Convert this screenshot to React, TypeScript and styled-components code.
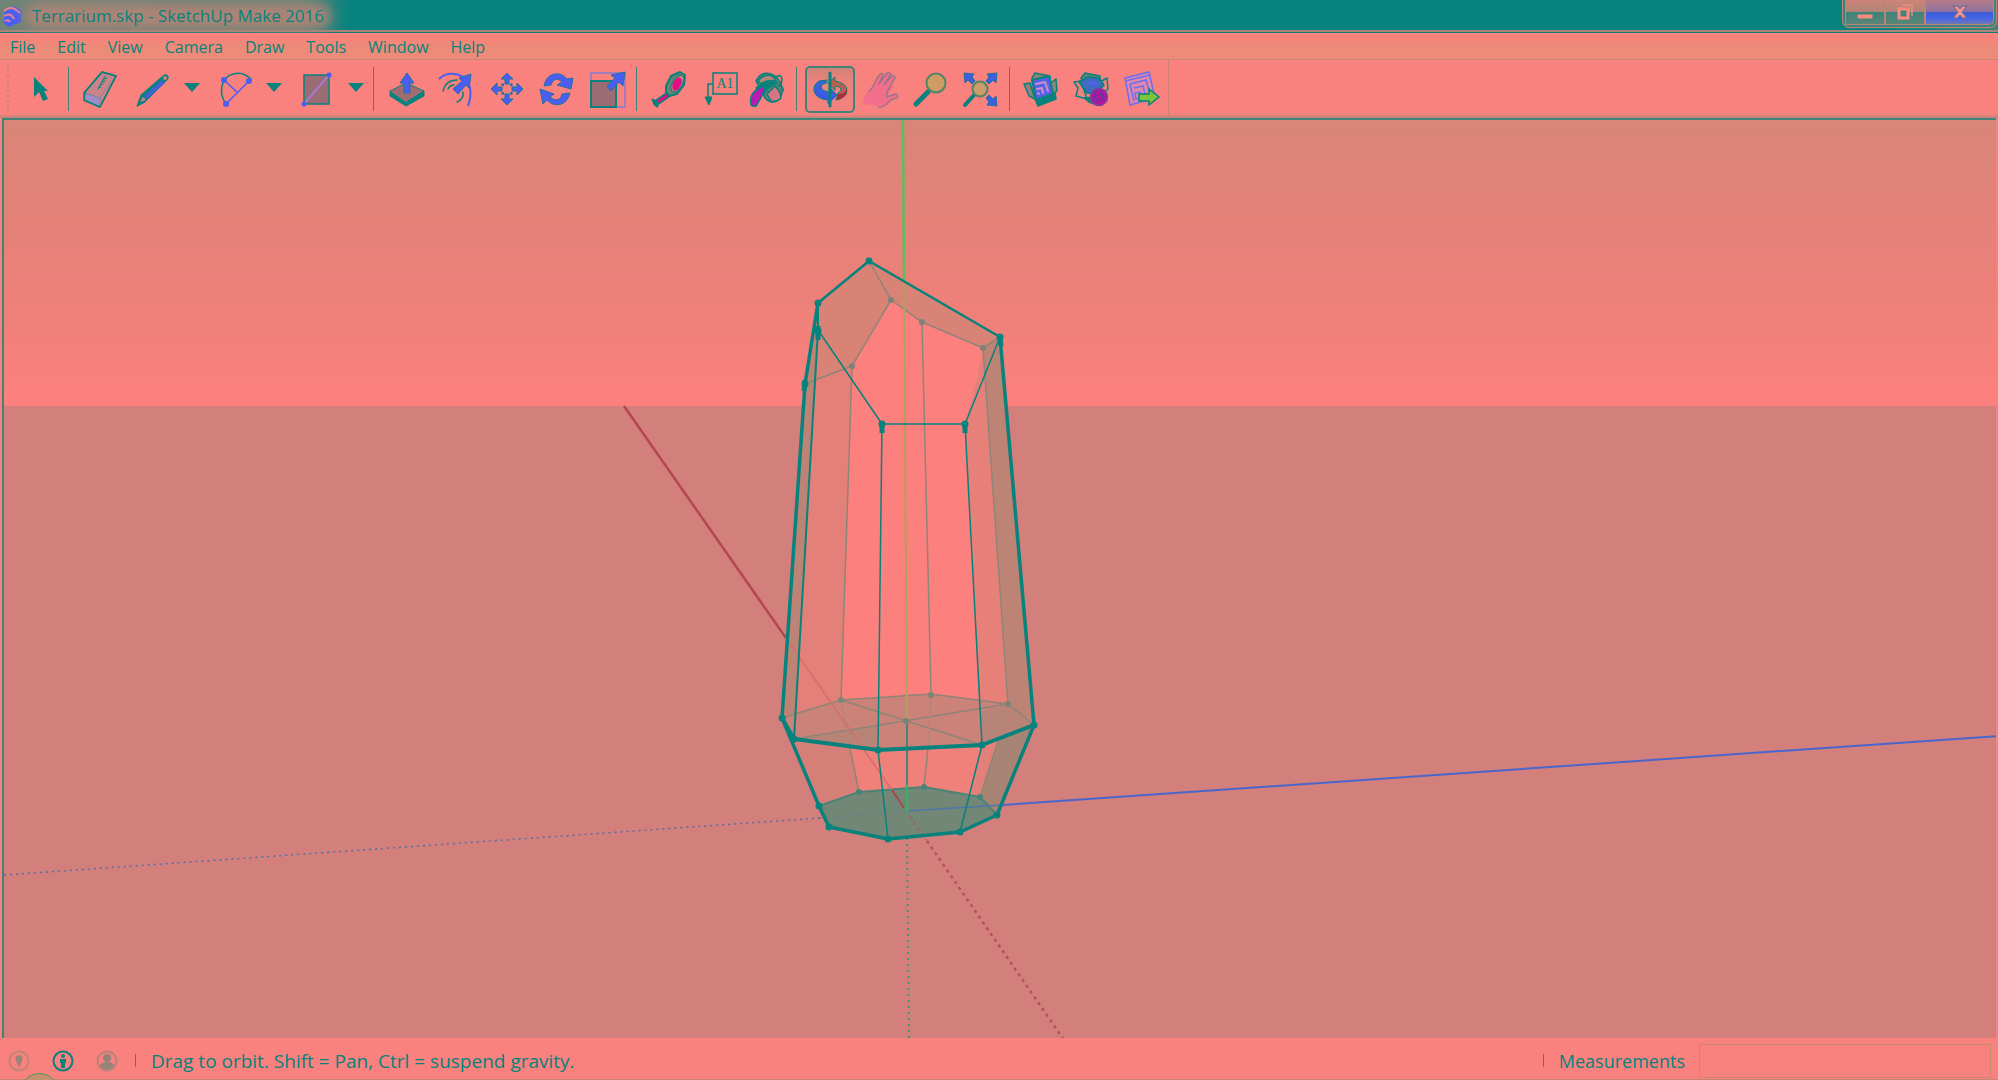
import React from "react";
import styled, { createGlobalStyle } from "styled-components";

const C = {
  teal: "#07827c",
  salmon: "#f9817e",
  blue: "#4a5ff2",
  edge: "#3f8479",
  dim: "#a38578",
  plum: "#9c6c74",
};

const GlobalStyle = createGlobalStyle`
  *, *::before, *::after { box-sizing: border-box; }
  body {
    margin: 0;
    background: ${C.salmon};
    color: ${C.teal};
    font: 16px/24px "Open Sans", "Noto Sans", sans-serif;
  }
  button, input { font: inherit; color: inherit; }
`;

const Window = styled.div`
  min-height: 100vh;
  display: flex;
  flex-direction: column;
  overflow: hidden;
`;

const TitleBar = styled.header`
  height: 33px;
  display: flex;
  align-items: flex-start;
  justify-content: space-between;
  background: linear-gradient(90deg, #6f8477 0, #5f8478 300px, #07827e 350px, #07827e 94%, #3f847c 100%);
  border-bottom: 1px solid ${C.teal};
  box-shadow: inset 0 -2px 0 #a98578;
`;

const Caption = styled.div`
  display: flex;
  align-items: center;
  gap: 10px;
  height: 32px;
  padding-left: 2px;
`;

const Title = styled.h1`
  margin: 0;
  font-size: 17px;
  font-weight: 400;
  line-height: 12px;
  border-radius: 8px;
  background: #a98476;
  box-shadow: 0 0 12px 7px #a98476;
`;

const WindowButtons = styled.div`
  display: flex;
  height: 28px;
  margin-right: 1px;
  padding: 0 2px 2px;
  border: 1px solid #c08578;
  border-top: 0;
  border-radius: 0 0 7px 7px;
  background: #3c8479;
`;

const WindowButton = styled.button<{ $wide?: boolean }>`
  width: ${(p) => (p.$wide ? 69 : 40)}px;
  padding: 0;
  display: grid;
  place-items: center;
  border: 1px solid #b98578;
  border-top: 0;
  border-radius: ${(p) => (p.$wide ? "0 0 5px 0" : "0")};
  background: ${(p) =>
    p.$wide
      ? "linear-gradient(#b77c86 0, #8d72a0 48%, #3d5bd0 50%, #4463e6 75%, #6e78b4 100%)"
      : "linear-gradient(#cf8478 0, #b08478 48%, #39847a 50%, #5d8478 100%)"};
`;

const MenuBar = styled.nav`
  display: flex;
  gap: 22px;
  height: 27px;
  padding: 1px 10px 0;
  background: linear-gradient(#ff807f 0, #f18779 40%, #ea8c78 60%, #f08979 100%);
  border-bottom: 1px solid #c48a78;
`;

const MenuItem = styled.button`
  padding: 0;
  border: 0;
  background: none;
  line-height: 24px;
`;

const ToolRow = styled.div`
  display: flex;
  height: 58px;
  background: linear-gradient(${C.salmon} 54px, #b98478 58px);
`;

const Tools = styled.div`
  display: flex;
  align-items: center;
  height: 58px;
  border-right: 1px solid #cf8478;
`;

const Grip = styled.div`
  width: 14px;
  height: 48px;
  padding-left: 7px;
  &::before {
    content: "";
    display: block;
    width: 2px;
    height: 100%;
    background: repeating-linear-gradient(#c48478 0 2px, transparent 2px 5px);
  }
`;

const Separator = styled.div`
  width: 1px;
  height: 44px;
  margin: 0 8px 0 4px;
  background: ${C.edge};
`;

const Tool = styled.button<{ $w?: number; $on?: boolean }>`
  width: ${(p) => p.$w ?? 50}px;
  height: 47px;
  padding: 0;
  display: grid;
  place-items: center;
  border-radius: 5px;
  border: ${(p) => (p.$on ? `2px solid ${C.edge}` : "0")};
  background: ${(p) => (p.$on ? "linear-gradient(#cf8478 0, #ec827d 30%, #f4827e 100%)" : "none")};
`;

const Stage = styled.main`
  flex: 1;
  min-height: 0;
  display: flex;
  margin: 0 2px;
  border-left: 2px solid ${C.edge};
  border-top: 2px solid ${C.edge};
  background: linear-gradient(#d98577 0, #eb8079 18%, #fd807e 31.2%, #d37f7b 31.2%);
`;

const Scene = styled.svg`
  flex: 1;
  width: 100%;
  min-width: 0;
  display: block;
`;

const StatusBar = styled.footer`
  position: relative;
  display: flex;
  align-items: center;
  height: 42px;
  padding: 5px 7px 1px 8px;
  font-size: 18px;
  border-bottom: 1px solid #c98478;
`;

const StatusButtons = styled.div`
  display: flex;
  gap: 22px;
  margin-right: 17px;
`;

const StatusButton = styled.button`
  width: 22px;
  height: 22px;
  padding: 0;
  border: 0;
  background: none;
`;

const Bar = styled.span`
  width: 1px;
  height: 13px;
  margin-right: 15px;
  background: ${C.edge};
`;

const Hint = styled.p`
  flex: 1;
  margin: 0;
  font-size: 19px;
`;

const Measure = styled.label`
  display: flex;
  align-items: center;
  gap: 14px;
`;

const MeasureInput = styled.input`
  width: 292px;
  height: 34px;
  border: 1px solid #c98a72;
  background: transparent;
`;

const StartOrb = styled.div`
  position: absolute;
  left: 20px;
  top: 35px;
  width: 39px;
  height: 7px;
  overflow: hidden;
  &::before {
    content: "";
    display: block;
    height: 39px;
    border: 1px solid #4f9a55;
    border-radius: 50%;
    background: #c59070;
  }
`;

const Icon = ({ children, size = 40 }: { children: React.ReactNode; size?: number }) => (
  <svg width={size} height={size} viewBox="0 0 40 40" fill="none" aria-hidden="true" display="block">
    {children}
  </svg>
);

const T = { stroke: C.teal, strokeLinejoin: "round" as const, strokeLinecap: "round" as const };

const icons = {
  select: <path d="M15 8v20l5-5 4 9 5-2-4-8h4z" fill={C.teal} />,
  eraser: (
    <g {...T} strokeWidth="1.5">
      <path d="M4 24 22 3l14 4-16 31L4 31z" fill="#c98389" />
      <path d="m5 24 15 5v9L4 31z" fill="#a08cc6" stroke="#7b84a0" strokeWidth="1" />
      <path d="m20 28 15-20" stroke="#97848a" strokeWidth="1" />
      <path d="M22 3 36 7 20 38 4 31 5 23z" />
      <path d="m18 19 3-1m-1-2 3-1m-1-2 3-1m-1-2 3-1m-9 11 7-13" strokeWidth="1" />
    </g>
  ),
  pencil: (
    <g {...T}>
      <path d="m5 37 4-11L32 6q5-1 4 4L13 33z" fill={C.teal} />
      <path d="m12 27 18-16 3 3-18 16z" fill="#3f62d6" stroke="none" />
      <path d="m8 33 3-5 3 3z" fill="#d77f80" stroke="none" />
      <circle cx="33" cy="9" r="2" fill="#c4847c" stroke="none" />
    </g>
  ),
  arc: (
    <g transform="translate(1 0)">
      <path d="M11 35C3 24 6 8 18 5q10-3 18 5" {...T} strokeWidth="1.5" />
      <path d="M11 35 34 12M9 11l14 13" stroke={C.blue} strokeWidth="1.5" />
      <g fill={C.blue}>
        <circle cx="11" cy="35" r="3" />
        <circle cx="34" cy="12" r="3" />
        <circle cx="9" cy="11" r="3" />
      </g>
    </g>
  ),
  rect: (
    <g>
      <path d="M8 6h25v29H8z" fill={C.plum} stroke={C.teal} strokeWidth="1.5" />
      <path d="M8 35 33 6" stroke="#a27bd0" strokeWidth="2" />
      <circle cx="8" cy="35" r="2.5" fill={C.blue} />
      <circle cx="33" cy="6" r="2.5" fill={C.blue} />
    </g>
  ),
  push: (
    <g>
      <path d="M3 23v4l16 10 18-10v-5L19 34z" fill={C.teal} {...T} />
      <path d="M3 22 19 14l18 8-18 11z" fill="#a06c70" {...T} />
      <path d="M17 24V14h-4l7-10 7 10h-4v10z" fill={C.blue} stroke="#24709c" />
    </g>
  ),
  offset: (
    <g>
      <path d="M2 10C14-2 42 6 31 37" stroke={C.blue} strokeWidth="2" />
      <path d="M6 22q3-11 14-11M11 20q2-4 6-4M20 33q7-3 6-10" {...T} strokeWidth="1.5" />
      <path d="m16 20 9-8-3-3 12-4-2 14-3-3-8 9z" fill={C.blue} stroke="#24709c" />
    </g>
  ),
  move: (
    <g fill={C.blue} stroke="#24709c">
      {[0, 90, 180, 270].map((a) => (
        <path key={a} d="M18 15v-5h-4l6-6 6 6h-4v5z" transform={`rotate(${a} 20 20)`} />
      ))}
      {[45, 135, 225, 315].map((a) => (
        <circle key={a} cx="20" cy="14" r="1" transform={`rotate(${a} 20 20)`} />
      ))}
    </g>
  ),
  rotate: (
    <g fill={C.blue} stroke="#24709c">
      <path d="M7 17C9 4 23 1 30 10l6-1-2 11-14-4 5-3c-5-5-9-3-11 3z" />
      <path d="M33 24C30 37 17 39 10 31l-4 4-3-15 14 5-4 3c6 5 11 3 12-3z" />
    </g>
  ),
  scale: (
    <g>
      <path d="M4 4h34v34H4z" stroke="#837bd6" strokeWidth="1.5" />
      <path d="M4 12h25v26H4z" fill={C.plum} stroke={C.teal} strokeWidth="2" />
      <path d="m20 17 8-8-4-3 14-3-2 14-4-4-8 9z" fill={C.blue} stroke="#24709c" />
    </g>
  ),
  tape: (
    <g {...T}>
      <path d="M19 25 6 34" strokeWidth="6" />
      <path d="m18 26-9 6" stroke="#d80f83" strokeWidth="3" />
      <path d="m16 17 5-10 9-4 5 3-1 10-7 9-8 2-3-4z" fill="#648476" strokeWidth="2" />
      <path d="m21 17 4-8 6-3 3 3-2 8-6 6-4-1z" fill="#c8887a" strokeWidth="1" />
      <ellipse cx="27" cy="15" rx="4" ry="7" transform="rotate(25 27 15)" fill="#e40b84" stroke="none" />
      <path d="m3 31 4 6" strokeWidth="3" />
    </g>
  ),
  text: (
    <g>
      <path d="M14 4h24v21H14zM14 15H9v14" stroke={C.teal} strokeWidth="1.5" />
      <path d="M6 28h7l-3 8z" fill={C.teal} stroke={C.teal} />
      <text x="26" y="19" textAnchor="middle" fill={C.teal} fontSize="14" fontFamily="Liberation Serif, serif">A1</text>
    </g>
  ),
  paint: (
    <g {...T} strokeWidth="1.5" transform="translate(-2 0)">
      <path d="M10 12Q15 2 25 5q9 3 11 14 1 8-5 13-7 3-12-3z" fill="#5a8477" />
      <path d="M12 12q6-8 14-5 3 2 4 5-9-2-15 3z" fill="#b48673" />
      <path d="m21 25 8-8q6 6 6 12-5 5-10 3z" fill="#d47685" />
      <path d="M10 19q9-8 21-5-10 4-14 12z" fill={C.teal} />
      <path d="M5 36q-3-14 14-19-1 8-9 20-3 1-5-1z" fill="#b91bb4" />
      <path d="M28 9q7-5 8 1 0 5-4 7m2-1q4 3 3 6" />
    </g>
  ),
  orbit: (
    <g {...T} strokeWidth="1">
      <path d="M17 11 9 12q-6 4-5 10 2 8 14 9v4l9-9-8-8v5q-7-1-8-5 0-3 5-4z" fill="#3c60dd" />
      <path d="M4 20q1 8 14 11v4l9-9q-12 6-23-6z" fill="#3a55ee" stroke="none" />
      <path d="m18 14 7-6v4q12 2 12 10-1 7-11 9l2-7q4-2 3-4-1-3-6-3v4z" fill="#b8604f" />
      <path d="M37 19q-1 6-9 6l-2 6q10-1 11-9z" fill="#a8323c" stroke="none" />
      <path d="M20 4v33" strokeWidth="3" />
    </g>
  ),
  hand: (
    <g>
      <path
        d="M3 35q1-10 9-16L19 6q3-3 4 0l-2 6 6-8q3-1 4 1l-5 8 6-6q3-1 3 2l-6 9 3-1q2 1 0 3l-5 7 8-3q4 1 2 4-7 1-10 6-5 5-11 3-7-2-13-2z"
        fill="#f16f8b"
      />
      <path
        d="m9 22 3-3 7-13q3-3 4 0l-4 9 8-11q3-1 4 1l-7 11 8-9q3-1 3 2l-7 12q-2 4-1 7l8-3q4 1 2 4-7 1-10 6-5 4-9 3"
        stroke="#9c7584"
        strokeWidth="1.5"
        strokeLinejoin="round"
      />
    </g>
  ),
  zoom: (
    <g {...T}>
      <path d="M18 23 6 35" strokeWidth="5" />
      <circle cx="26" cy="14" r="9.500" fill="#cd9d65" stroke="#4f8568" strokeWidth="2" />
    </g>
  ),
  extents: (
    <g>
      <path d="m15 25-10 11" {...T} strokeWidth="4" />
      <circle cx="20" cy="20" r="7.500" fill="#c99d65" stroke="#4f8568" strokeWidth="2" />
      <g fill="#3c60dd" stroke="#24709c">
        <path d="m4 4 10 1-2 3 3 4-3 3-4-4-3 3z" />
        <path d="m37 4-10 1 2 3-3 4 3 3 4-4 3 3z" />
        <path d="m37 37-10-1 2-3-3-4 3-3 4 4 3-3z" />
      </g>
    </g>
  ),
  models: (
    <g {...T} strokeWidth="1.5" transform="translate(-2 0)">
      <path d="m3 15 6-1 5 16-6-3z" fill="#8c847a" />
      <path d="m11 9 3-5 15 3v6l-16 3z" fill="#8c847a" />
      <path d="m28 15 7-5 1 12-7 6z" fill="#8c847a" />
      <path d="m14 30 20-6 1 6-18 7z" fill={C.teal} />
      <path d="m11 11 17-4 4 18-17 6z" fill="#5263ea" strokeWidth="2" />
      <path d="m15 15 9-2 3 9m-11-2 5-1 1 5m-5 0 1 1" stroke="#d68cc4" strokeWidth="2" />
    </g>
  ),
  warehouse: (
    <g {...T} strokeWidth="1.5" transform="translate(-2 0)">
      <path d="m3 13 7-1 6 18-11-3 2-8z" fill="#ec837c" />
      <path d="m10 9 4-5 15 3v6l-16 3z" fill="#5f8578" />
      <path d="m29 13 7-4 1 11-7 6z" fill="#ec837c" />
      <path d="m13 29 12-1 1 8-8-3z" fill={C.teal} />
      <path d="m8 13 9-5 11 1 5 7-8 9-9-1z" fill="#3f6cc0" />
      <path d="m15 13 6-1 6 2-4 3z" fill="#5263ea" stroke="none" />
      <circle cx="28" cy="28" r="8.500" fill="#b313a9" stroke="#7d4398" />
      <path d="M26 22q-4 2-1 5l-3 3m9-9-2 5 4 1-3 5m-4-3v4" stroke="#5a3f90" />
    </g>
  ),
  layout: (
    <g transform="translate(-2 0)">
      <path d="m4 9 24-6 6 26-25 7z" fill="#e386ac" stroke="#6c70ee" strokeWidth="1.5" />
      <path d="m4 12 25-6M9 15l16-4 4 14M9 15l4 17M13 19l9-2 2 8M14 24l5-1 1 6-5 1z" stroke="#6c70ee" strokeWidth="1.5" />
      <path d="M18 25h10v-5l10 8-10 8v-4H18z" fill="#7bc53b" stroke={C.teal} strokeWidth="1.5" />
    </g>
  ),
};

type Name = keyof typeof icons;

const Plain = ({ name, label, w, on }: { name: Name; label: string; w?: number; on?: boolean }) => (
  <Tool aria-label={label} aria-pressed={on} $w={w} $on={on}>
    <Icon>{icons[name]}</Icon>
  </Tool>
);

const Split = ({ name, label }: { name: Name; label: string }) => (
  <>
    <Plain name={name} label={label} w={58} />
    <Tool aria-label={`${label} options`} $w={24}>
      <svg width="18" height="14" viewBox="0 0 18 14" aria-hidden="true">
        <path d="M0 1h16L8 10z" fill={C.teal} />
      </svg>
    </Tool>
  </>
);

const joints = [
  [869, 261], [818, 303], [818, 331], [805, 384], [1000, 337], [882, 424], [965, 424],
  [782, 718], [794, 739], [878, 750], [982, 745], [1034, 725],
  [819, 806], [829, 827], [888, 839], [960, 832], [997, 815],
];
const backJoints = [
  [891, 300], [922, 322], [983, 348], [852, 366], [841, 700], [931, 695], [1008, 704], [906, 721],
];

const Terrarium = () => (
  <Scene viewBox="4 120 1992 918" preserveAspectRatio="xMidYMid slice" role="img" aria-label="Terrarium model">
    <path d="M624 406 786 638" stroke="#b5484f" strokeWidth="2.5" />
    <path d="M1003 805 1998 736" stroke="#4a66cc" strokeWidth="2" />
    <path d="M4 875 820 818" stroke="#4f6fae" strokeWidth="1.5" strokeDasharray="2 4" />
    <path d="M907 838 909 1040" stroke="#3f9670" strokeWidth="2" strokeDasharray="2 4" />
    <path d="M927 841 1064 1040" stroke="#b84f57" strokeWidth="2.5" strokeDasharray="3 4" />

    <path d="M869 261 1000 337 1034 725 997 815 960 832 888 839 829 827 819 806 782 718 805 384 818 303z" fill="#e38079" />
    <path d="M891 300 922 322 983 348 978 375 965 424 982 712 931 694 841 700 852 366z" fill="#fc807e" />
    <path d="M869 261 891 300 852 366 805 384 818 303zM869 261 1000 337 983 348 922 322 891 300z" fill="#d88376" />
    <path d="M818 330 805 384 782 718 794 739z" fill="#bd8475" />
    <path d="M1000 337 1034 725 1008 704 983 348z" fill="#bd8475" />
    <path d="M965 424 983 372 1008 704 979 702z" fill="#e78079" />
    <path d="M782 718 841 700 931 694 1008 704 1034 725 982 745 878 750 794 739z" fill="#cb8278" />
    <path d="M794 739 878 726V750zM981 712 1008 704 1034 725 982 745z" fill="#b98478" />
    <path d="M794 739 850 748 859 792 819 806z" fill="#d67f78" />
    <path d="M850 748 878 750 982 745 970 797 924 787 859 792z" fill="#f0807a" />
    <path d="M998 740 1034 725 997 815 980 797z" fill="#a88475" />
    <path d="M819 806 859 792 924 787 980 797 997 815 960 832 888 839 829 827z" fill="#728775" />

    <g stroke="#8d8577" strokeWidth="1.5" fill="none">
      <path d="M869 261 891 300 852 366 805 384M891 300 922 322 983 348 1000 337" />
      <path d="M852 366 841 700M922 322 931 694M983 348 1008 704" />
      <path d="M782 718 841 700 931 694 1008 704 1034 725M794 739 1008 704M841 700 982 745" />
      <path d="M850 748 859 792M928 748 924 787M998 741 980 797" />
    </g>
    <path d="M841 700 850 748M931 694 928 748M1008 704 998 741" stroke="#b58478" />
    <path d="M819 806 859 792 924 787 980 797 997 815" stroke="#498476" strokeWidth="2" fill="none" />
    <path d="M786 638 892 790" stroke="#cf6f6d" strokeWidth="1.5" />
    <path d="M892 790 904 808" stroke="#a3484d" strokeWidth="2" />
    <path d="M906 811 1003 805" stroke="#4d77a8" strokeWidth="1.500" />
    <path d="M820 818 906 811" stroke="#5e7d94" strokeDasharray="2 4" />
    <path d="M910 816 926 840" stroke="#a3605f" strokeWidth="2" strokeDasharray="3 4" />
    <path d="M903 118 904 280" stroke="#5fbd5e" strokeWidth="2.5" />
    <path d="M904 280 907 722" stroke="#b59f60" strokeWidth="2" />
    <path d="M907 722V785" stroke="#498476" strokeWidth="2" />
    <path d="M907 784V812" stroke="#43ad65" strokeWidth="2.5" />

    <g fill="#7c8477">
      {backJoints.map(([x, y]) => <circle key={`${x}-${y}`} cx={x} cy={y} r="3" />)}
    </g>
    <g fill="#498476">
      <circle cx="859" cy="792" r="3" /><circle cx="924" cy="787" r="3" /><circle cx="980" cy="797" r="3" />
    </g>
    <g stroke={C.teal} fill="none" strokeLinejoin="round">
      <path d="M818 303 869 261 1000 337" strokeWidth="2.5" />
      <path d="M818 303 805 384 782 718 819 806 829 827 888 839 960 832 997 815 1034 725 1000 337" strokeWidth="3.5" />
      <path d="M782 718 794 739 878 750 982 745 1034 725" strokeWidth="4" />
      <path d="M818 303V330L794 739" strokeWidth="2" />
      <path d="M818 330 882 424H965L1000 337M882 424 878 750 888 839M965 424 982 745 960 832" strokeWidth="1.5" />
      <path d="M818 326V340M805 380 804 391M1000 337 1001 346M869 258V264M882 424V433M965 424V433" strokeWidth="5" />
    </g>
    <g fill={C.teal}>
      {joints.map(([x, y]) => <circle key={`${x}-${y}`} cx={x} cy={y} r="3.5" />)}
    </g>
  </Scene>
);

const menus = ["File", "Edit", "View", "Camera", "Draw", "Tools", "Window", "Help"];

export default function App() {
  return (
    <Window>
      <GlobalStyle />
      <TitleBar>
        <Caption>
          <svg width="20" height="22" viewBox="0 0 20 22" aria-hidden="true">
            <path d="M2 7 12 1l7 4v12L6 22l-4-4z" fill={C.blue} />
            <path d="M2 6q7-7 16 2M2 11q7-4 10 3M3 16q3-2 5 1" fill="none" stroke="#e78390" strokeWidth="2" />
          </svg>
          <Title>Terrarium.skp - SketchUp Make 2016</Title>
        </Caption>
        <WindowButtons>
          <WindowButton aria-label="Minimize">
            <svg width="18" height="20" viewBox="0 0 18 20"><path d="M1 12h16v5H1z" fill="#ff8b80" stroke={C.edge} /></svg>
          </WindowButton>
          <WindowButton aria-label="Restore">
            <svg width="18" height="20" viewBox="0 0 18 20" fill="none">
              <path d="M6 3h10v11" stroke="#f08a80" strokeWidth="1.5" />
              <path d="M3 7h9v9H3z" fill="#3f8479" stroke="#ff8b80" strokeWidth="3" />
            </svg>
          </WindowButton>
          <WindowButton aria-label="Close" $wide>
            <svg width="18" height="18" viewBox="0 0 18 18">
              <path d="M2 3h5l2 3 2-3h5l-5 6 5 6h-5l-2-3-2 3H2l5-6z" fill="#f59090" stroke="#5a6898" />
            </svg>
          </WindowButton>
        </WindowButtons>
      </TitleBar>
      <MenuBar>
        {menus.map((m) => <MenuItem key={m}>{m}</MenuItem>)}
      </MenuBar>
      <ToolRow>
        <Tools role="toolbar" aria-label="Getting started">
          <Grip />
          <Plain name="select" label="Select" />
          <Separator />
          <Plain name="eraser" label="Eraser" w={46} />
          <Split name="pencil" label="Line" />
          <Split name="arc" label="Arc" />
          <Split name="rect" label="Rectangle" />
          <Separator />
          <Plain name="push" label="Push/Pull" />
          <Plain name="offset" label="Offset" />
          <Plain name="move" label="Move" />
          <Plain name="rotate" label="Rotate" />
          <Plain name="scale" label="Scale" />
          <Separator />
          <Plain name="tape" label="Tape Measure" w={49} />
          <Plain name="text" label="Text" w={49} />
          <Plain name="paint" label="Paint Bucket" w={49} />
          <Separator />
          <Plain name="orbit" label="Orbit" on />
          <Plain name="hand" label="Pan" />
          <Plain name="zoom" label="Zoom" />
          <Plain name="extents" label="Zoom Extents" />
          <Separator />
          <Plain name="models" label="Get Models" />
          <Plain name="warehouse" label="Extension Warehouse" />
          <Plain name="layout" label="Send to LayOut" />
        </Tools>
      </ToolRow>
      <Stage>
        <Terrarium />
      </Stage>
      <StatusBar>
        <StatusButtons>
          <StatusButton aria-label="Geo-location">
            <svg width="22" height="22" viewBox="0 0 22 22" display="block">
              <circle cx="11" cy="11" r="9.500" fill="none" stroke="#c18478" strokeWidth="2" />
              <path d="M11 18 8 11q-2-6 3-6t3 6z" fill="#9b8478" />
            </svg>
          </StatusButton>
          <StatusButton aria-label="Credits">
            <svg width="22" height="22" viewBox="0 0 22 22" display="block">
              <circle cx="11" cy="11" r="9.500" fill="none" stroke={C.teal} strokeWidth="2" />
              <circle cx="11" cy="6" r="2" fill={C.teal} />
              <path d="M8 9h6v4h-1v5H9v-5H8z" fill={C.teal} />
            </svg>
          </StatusButton>
          <StatusButton aria-label="Sign in">
            <svg width="22" height="22" viewBox="0 0 22 22" display="block">
              <circle cx="11" cy="11" r="9.500" fill="none" stroke="#b58478" strokeWidth="2" />
              <circle cx="11" cy="8" r="4" fill="#948478" />
              <path d="M4 16q1-4 7-4t7 4q-7 7-14 0z" fill="#948478" />
            </svg>
          </StatusButton>
        </StatusButtons>
        <Bar />
        <Hint>Drag to orbit. Shift = Pan, Ctrl = suspend gravity.</Hint>
        <Bar />
        <Measure>
          Measurements
          <MeasureInput type="text" />
        </Measure>
        <StartOrb />
      </StatusBar>
    </Window>
  );
}
